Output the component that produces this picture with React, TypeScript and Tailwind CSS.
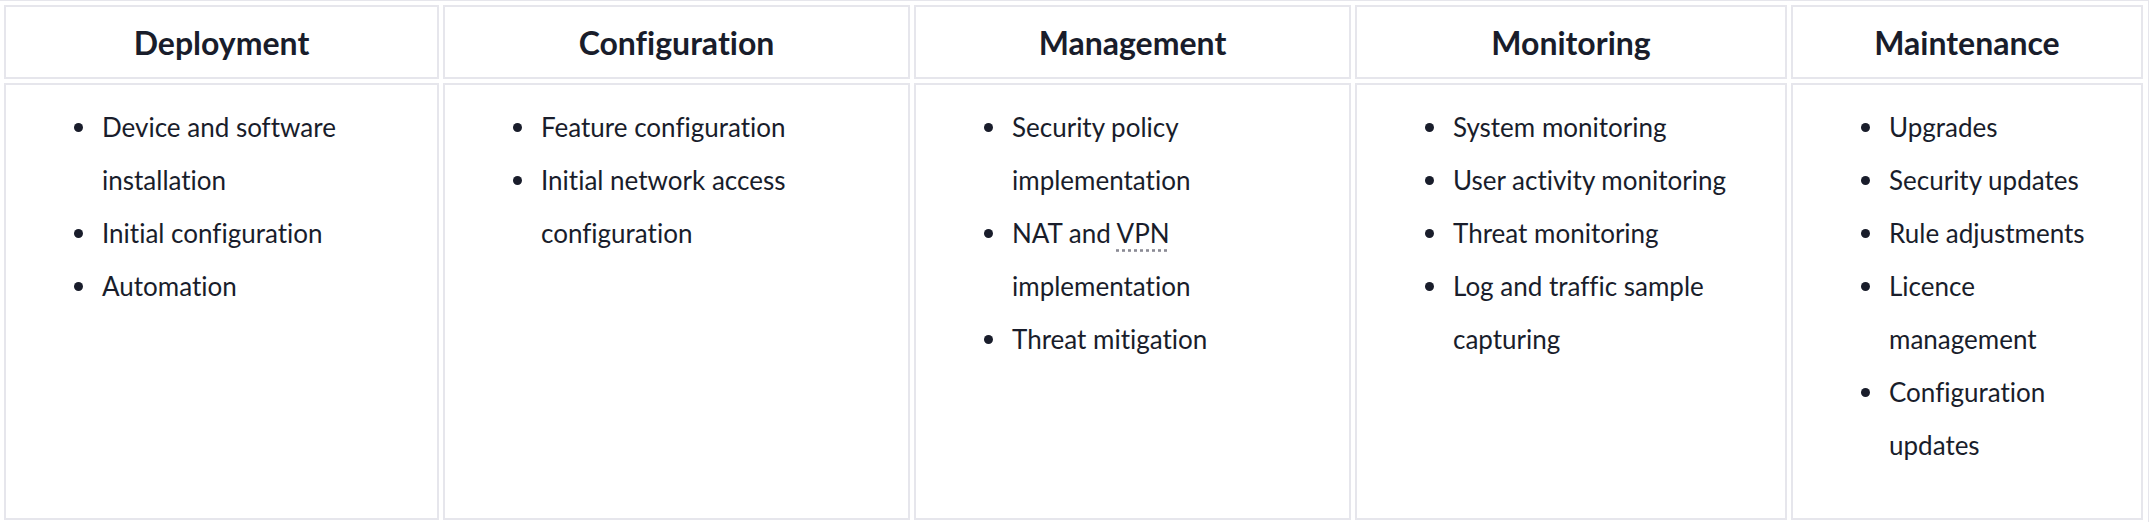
import React from "react";

type Phase = {
  title: string;
  width: string;
  items: React.ReactNode[];
};

const phases: Phase[] = [
  {
    title: "Deployment",
    width: "435px",
    items: ["Device and software installation", "Initial configuration", "Automation"],
  },
  {
    title: "Configuration",
    width: "467px",
    items: ["Feature configuration", "Initial network access configuration"],
  },
  {
    title: "Management",
    width: "437px",
    items: [
      "Security policy implementation",
      <>
        NAT and{" "}
        <abbr title="Virtual Private Network" className="decoration-[#8a8a94] underline-offset-[6px]">
          VPN
        </abbr>{" "}
        implementation
      </>,
      "Threat mitigation",
    ],
  },
  {
    title: "Monitoring",
    width: "432px",
    items: [
      "System monitoring",
      "User activity monitoring",
      "Threat monitoring",
      "Log and traffic sample capturing",
    ],
  },
  {
    title: "Maintenance",
    width: "352px",
    items: [
      "Upgrades",
      "Security updates",
      "Rule adjustments",
      "Licence management",
      "Configuration updates",
    ],
  },
];

const App: React.FC = () => {
  return (
    <div
      className="w-[2149px] h-[522px] bg-white border-t border-r border-[#e6e6ec] pt-[4px] pl-[4px] text-[#191d2b] [font-variant-ligatures:none]"
      style={{ fontFamily: '"Lato", "Liberation Sans", sans-serif' }}
    >
      <div className="grid grid-flow-col grid-rows-[74px_437px] auto-cols-max gap-[4px]">
        {phases.map((phase) => (
          <React.Fragment key={phase.title}>
            <div
              className="border-2 border-[#e6e6ec] flex items-center justify-center pt-[1px] text-[32px] font-bold"
              style={{ width: phase.width }}
            >
              {phase.title}
            </div>
            <div className="border-2 border-[#e6e6ec]" style={{ width: phase.width }}>
              <ul className="pt-[16px] pl-[68px] pr-[24px] text-[26px] leading-[53px]">
                {phase.items.map((item, i) => (
                  <li key={i} className="flex">
                    <span className="w-[28px] h-[53px] shrink-0 flex items-center">
                      <span className="w-[9px] h-[9px] rounded-full bg-[#191d2b] -mt-[1px]" />
                    </span>
                    <span>{item}</span>
                  </li>
                ))}
              </ul>
            </div>
          </React.Fragment>
        ))}
      </div>
    </div>
  );
};

export default App;
